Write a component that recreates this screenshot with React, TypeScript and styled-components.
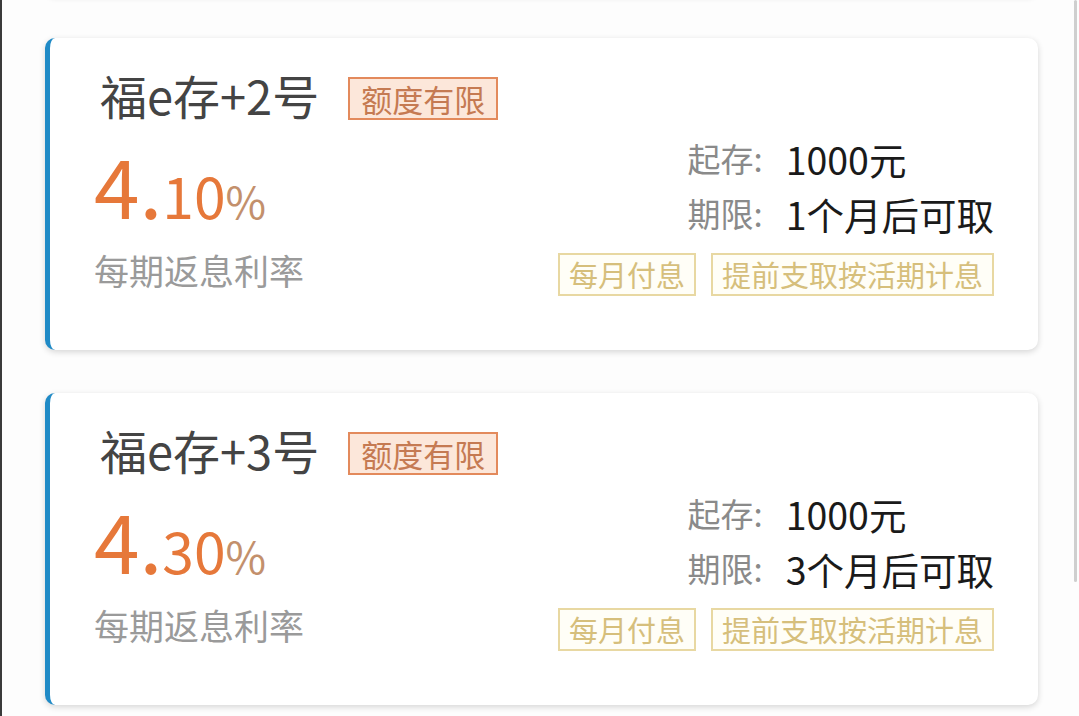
import React from "react";
import styled, { createGlobalStyle } from "styled-components";

const GlobalStyle = createGlobalStyle`
  html, body {
    margin: 0;
    padding: 0;
    background: #fdfdfd;
    font-family: "Noto Sans CJK SC", "Noto Sans", sans-serif;
    overflow: hidden;
  }
`;

const Screen = styled.div`
  position: relative;
  width: 1079px;
  height: 716px;
  overflow: hidden;
  border-left: 2px solid #3a3a3a;
  box-sizing: border-box;
  background: #fdfdfd;
`;

const ScrollThumb = styled.div`
  position: absolute;
  top: 0;
  right: 2px;
  width: 3px;
  height: 582px;
  background: #cfcfcf;
  border-radius: 2px;
`;

const List = styled.div`
  display: flex;
  flex-direction: column;
  gap: 43px;
  padding: 0 41px 0 43px;
`;

const Card = styled.div<{ $clipped?: boolean }>`
  background: #fff;
  border-left: 5px solid #1f8ac6;
  border-radius: 10px;
  box-shadow: 0 2px 6px rgba(0, 0, 0, 0.16);
  padding: 28px 44px 54px 44px;
  ${({ $clipped }) => $clipped && `
    height: 200px;
    padding: 0;
    margin-top: -205px;
    border-left-color: #fff;
  `}
`;

const Header = styled.div`
  display: flex;
  align-items: center;
  gap: 29px;
  height: 57px;
`;

const Title = styled.div`
  font-size: 47px;
  line-height: 57px;
  color: #444;
  padding-left: 6px;
`;

const Badge = styled.span`
  margin-top: 8px;
  font-size: 31px;
  line-height: 39px;
  padding: 0 11px;
  border: 2px solid #e38a5c;
  background: #fce7da;
  color: #c57a52;
`;

const Body = styled.div`
  display: flex;
  justify-content: space-between;
  align-items: flex-end;
  margin-top: 8px;
`;

const RateCol = styled.div`
  display: flex;
  flex-direction: column;
  padding-bottom: 4px;
`;

const Rate = styled.div`
  color: #e6783a;
  font-size: 82px;
  line-height: 82px;
  white-space: nowrap;
  .frac {
    font-size: 57px;
  }
  .pct {
    font-size: 44px;
    color: #c3906c;
  }
`;

const RateLabel = styled.div`
  margin-top: 7px;
  font-size: 35px;
  line-height: 44px;
  color: #9a9a9a;
`;

const InfoCol = styled.div`
  display: flex;
  flex-direction: column;
  align-items: flex-end;
`;

const InfoGrid = styled.div`
  display: grid;
  grid-template-columns: auto auto;
  column-gap: 23px;
  align-items: center;
`;

const InfoLabel = styled.div`
  font-size: 33px;
  line-height: 55px;
  color: #8a8a8a;
`;

const InfoValue = styled.div`
  font-size: 37.5px;
  line-height: 55px;
  color: #1a1a1a;
`;

const Tags = styled.div`
  display: flex;
  gap: 15px;
  margin-top: 12px;
`;

const Tag = styled.span`
  font-size: 29px;
  line-height: 39px;
  padding: 0 9px;
  border: 2px solid #e8d8a2;
  background: #fffef7;
  color: #d6bf7c;
  white-space: nowrap;
`;

type Product = {
  name: string;
  whole: string;
  frac: string;
  term: string;
};

const products: Product[] = [
  { name: "福e存+2号", whole: "4.", frac: "10", term: "1个月后可取" },
  { name: "福e存+3号", whole: "4.", frac: "30", term: "3个月后可取" },
];

const ProductCard = ({ p }: { p: Product }) => (
  <Card>
    <Header>
      <Title>{p.name}</Title>
      <Badge>额度有限</Badge>
    </Header>
    <Body>
      <RateCol>
        <Rate>
          {p.whole}
          <span className="frac">{p.frac}</span>
          <span className="pct">%</span>
        </Rate>
        <RateLabel>每期返息利率</RateLabel>
      </RateCol>
      <InfoCol>
        <InfoGrid>
          <InfoLabel>起存:</InfoLabel>
          <InfoValue>1000元</InfoValue>
          <InfoLabel>期限:</InfoLabel>
          <InfoValue>{p.term}</InfoValue>
        </InfoGrid>
        <Tags>
          <Tag>每月付息</Tag>
          <Tag>提前支取按活期计息</Tag>
        </Tags>
      </InfoCol>
    </Body>
  </Card>
);

export default function App() {
  return (
    <Screen>
      <GlobalStyle />
      <List>
        <Card $clipped />
        {products.map((p) => (
          <ProductCard key={p.name} p={p} />
        ))}
      </List>
      <ScrollThumb />
    </Screen>
  );
}
